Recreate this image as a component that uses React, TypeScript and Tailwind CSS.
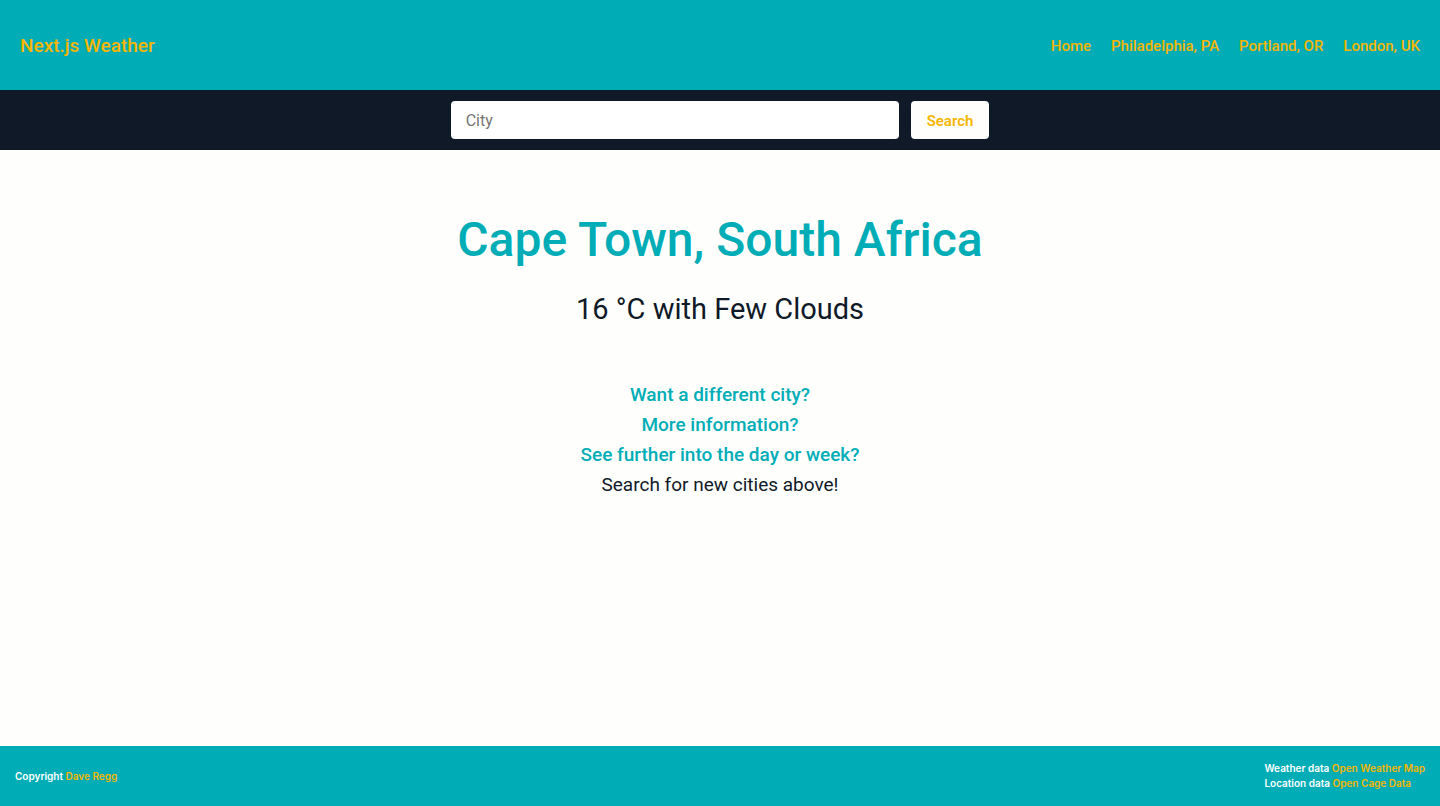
const cities = ["Home", "Philadelphia, PA", "Portland, OR", "London, UK"];

export default function App() {
  return (
    <div className="flex min-h-screen flex-col bg-[#fefffd] font-['Roboto','Inter',sans-serif] text-[#101928]">
      <header className="flex h-[90px] items-center justify-between bg-[#00adb7] px-5 pt-[2px] font-medium text-[#f7b500]">
        <a href="#" className="text-[19px] leading-[30px]">Next.js Weather</a>
        <nav className="flex gap-5 text-[15px] leading-6">
          {cities.map((city) => (
            <a key={city} href="#">{city}</a>
          ))}
        </nav>
      </header>
      <form className="flex h-[60px] items-center justify-center gap-3 bg-[#101928] px-5" onSubmit={(e) => e.preventDefault()}>
        <input
          type="text"
          aria-label="City"
          placeholder="City"
          className="h-[38px] w-full max-w-[448px] rounded bg-white px-[15px] text-[16px] placeholder:text-[#757575]"
        />
        <button type="submit" className="h-[38px] rounded bg-[#fefffd] px-4 pt-[2px] text-[15px] font-semibold text-[#f7b500]">
          Search
        </button>
      </form>
      <main className="flex flex-1 flex-col items-center px-5 pt-[52px] text-center">
        <h1 className="text-[48px] leading-[75px] font-medium text-[#00adb7]">Cape Town, South Africa</h1>
        <p className="mt-[10px] text-[29px] leading-[45px]">16 °C with Few Clouds</p>
        <div className="mt-12 text-[19px] leading-[30px]">
          <p className="font-medium text-[#00adb7]">Want a different city?</p>
          <p className="font-medium text-[#00adb7]">More information?</p>
          <p className="font-medium text-[#00adb7]">See further into the day or week?</p>
          <p>Search for new cities above!</p>
        </div>
      </main>
      <footer className="flex h-[60px] items-center justify-between bg-[#00adb7] px-[15px] font-['Inter',sans-serif] text-[10px] leading-[15px] font-semibold text-white">
        <p>Copyright <a href="#" className="text-[#f7b500]">Dave Regg</a></p>
        <div>
          <p>Weather data <a href="#" className="text-[#f7b500]">Open Weather Map</a></p>
          <p>Location data <a href="#" className="text-[#f7b500]">Open Cage Data</a></p>
        </div>
      </footer>
    </div>
  );
}
